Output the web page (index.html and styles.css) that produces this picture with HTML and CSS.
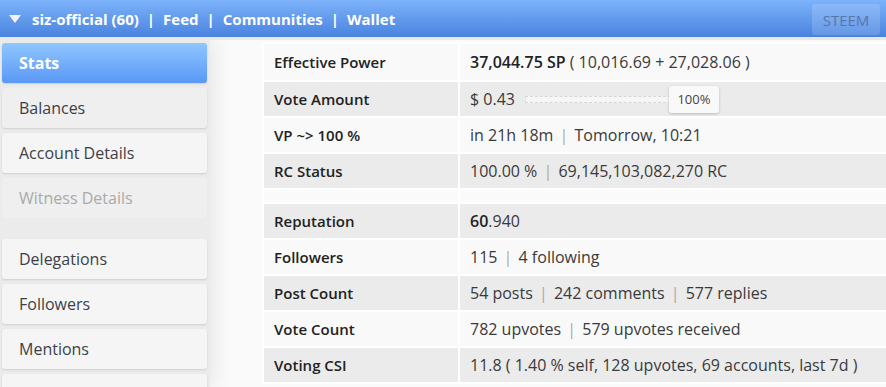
FILE: index.html
```html
<!DOCTYPE html>
<html lang="en">
<head>
    <meta charset="UTF-8">
    <title>siz-official - Stats</title>
    <link rel="stylesheet" href="styles.css">
</head>
<body>
    <div class="topbar">
        <div class="nav">
            <span class="caret"></span>
            <a href="#">siz-official (60)</a>
            <span class="sep">|</span>
            <a href="#">Feed</a>
            <span class="sep">|</span>
            <a href="#">Communities</a>
            <span class="sep">|</span>
            <a href="#">Wallet</a>
        </div>
        <button class="btn-chain">STEEM</button>
    </div>

    <div class="page">
        <div class="sidebar">
            <a class="menu-item active" href="#">Stats</a>
            <a class="menu-item" href="#">Balances</a>
            <a class="menu-item light" href="#">Account Details</a>
            <a class="menu-item disabled" href="#">Witness Details</a>
            <div class="menu-gap"></div>
            <a class="menu-item light" href="#">Delegations</a>
            <a class="menu-item light" href="#">Followers</a>
            <a class="menu-item light" href="#">Mentions</a>
            <a class="menu-item light" href="#"></a>
        </div>

        <div class="content">
            <table class="stats">
                <tr class="first">
                    <th>Effective Power</th>
                    <td><strong>37,044.75 SP</strong> ( 10,016.69 + 27,028.06 )</td>
                </tr>
                <tr class="dark">
                    <th>Vote Amount</th>
                    <td>
                        <div class="vote">
                            <span>$ 0.43</span>
                            <div class="slider">
                                <span class="track"></span>
                                <span class="thumb">100%</span>
                            </div>
                        </div>
                    </td>
                </tr>
                <tr>
                    <th>VP ~&gt; 100 %</th>
                    <td>in 21h 18m <span class="sep">|</span> Tomorrow, 10:21</td>
                </tr>
                <tr class="dark">
                    <th>RC Status</th>
                    <td>100.00 % <span class="sep">|</span> 69,145,103,082,270 RC</td>
                </tr>
                <tr class="spacer">
                    <th></th>
                    <td></td>
                </tr>
                <tr class="dark">
                    <th>Reputation</th>
                    <td><strong>60</strong>.940</td>
                </tr>
                <tr>
                    <th>Followers</th>
                    <td>115 <span class="sep">|</span> 4 following</td>
                </tr>
                <tr class="dark">
                    <th>Post Count</th>
                    <td>54 posts <span class="sep">|</span> 242 comments <span class="sep">|</span> 577 replies</td>
                </tr>
                <tr>
                    <th>Vote Count</th>
                    <td>782 upvotes <span class="sep">|</span> 579 upvotes received</td>
                </tr>
                <tr class="dark">
                    <th>Voting CSI</th>
                    <td>11.8 ( 1.40 % self, 128 upvotes, 69 accounts, last 7d )</td>
                </tr>
            </table>
        </div>
    </div>
</body>
</html>
```

FILE: styles.css
```css
* {
    margin: 0;
    padding: 0;
    box-sizing: border-box;
}

html, body {
    height: 387px;
    overflow: hidden;
}

body {
    font-family: 'Open Sans', 'Liberation Sans', sans-serif;
    font-size: 16px;
    background: #fafafa;
    color: #3a3a3a;
}

a {
    text-decoration: none;
    color: inherit;
}

/* top bar */
.topbar {
    height: 40px;
    display: flex;
    align-items: flex-start;
    justify-content: space-between;
    background: linear-gradient(#7db3fa, #4983de) no-repeat;
    background-size: 100% 37px;
    border-bottom: 3px solid #e8e8e8;
    padding: 0 6px 0 9px;
}

.nav {
    height: 37px;
    display: flex;
    align-items: center;
    gap: 8px;
    color: #fff;
    font-weight: 700;
    font-size: 15px;
}

.caret {
    width: 0;
    height: 0;
    border-left: 6px solid transparent;
    border-right: 6px solid transparent;
    border-top: 8px solid #eef2f8;
    margin-right: 3px;
}

.btn-chain {
    margin-top: 4px;
    width: 68px;
    height: 31px;
    border: none;
    border-radius: 3px;
    background: rgba(255,255,255,0.15);
    color: #5676ab;
    font-family: 'Open Sans', sans-serif;
    font-size: 15px;
}

/* layout */
.page {
    display: flex;
    height: 347px;
    overflow: hidden;
}

.sidebar {
    width: 210px;
    flex-shrink: 0;
    background: #ebebeb;
    padding: 3px 3px 0 2px;
    display: flex;
    flex-direction: column;
    gap: 5px;
    box-shadow: 6px 0 18px rgba(0,0,0,0.07);
    position: relative;
    z-index: 1;
}

.menu-item {
    display: block;
    height: 40px;
    flex-shrink: 0;
    line-height: 40px;
    padding-left: 17px;
    border-radius: 3px;
    background: #efefef;
    color: #3d3f48;
    box-shadow: 0 1px 2px rgba(0,0,0,0.12);
}

.menu-item.light {
    background: #f5f5f5;
}

.menu-item.active {
    background: linear-gradient(#8fc6fe, #5a98f6);
    color: #fff;
    font-weight: 700;
}

.menu-item.disabled {
    color: #aaa;
    box-shadow: none;
    background: #efefef;
}

.menu-gap {
    height: 11px;
    flex-shrink: 0;
}

.content {
    padding: 2px 0 0 52px;
    flex: 1;
    min-width: 0;
    overflow: hidden;
}

/* stats table */
.stats {
    border-collapse: separate;
    border-spacing: 2px;
    background: #fff;
    width: 680px;
}

.stats th,
.stats td {
    height: 34px;
    padding: 0 10px;
    text-align: left;
    white-space: nowrap;
    background: #f9f9f9;
}

.stats th {
    width: 194px;
    font-size: 15px;
    font-weight: 600;
    color: #222;
}

.stats tr.first th,
.stats tr.first td {
    height: 36px;
}

.stats tr.dark th,
.stats tr.dark td {
    background: #ebebeb;
}

.stats tr.spacer th,
.stats tr.spacer td {
    height: 12px;
    background: #fafafa;
}

.stats strong {
    font-weight: 600;
    color: #222;
}

.stats .sep {
    color: #aaa;
    margin: 0 2px;
}

.vote {
    display: flex;
    align-items: center;
    gap: 10px;
}

.slider {
    position: relative;
    width: 194px;
    height: 27px;
    display: flex;
    align-items: center;
}

.track {
    display: block;
    width: 146px;
    height: 7px;
    border: 1px dashed #d6d6d6;
    background: #f6f6f6;
}

.thumb {
    position: absolute;
    left: 144px;
    top: 0;
    width: 50px;
    height: 27px;
    line-height: 27px;
    text-align: center;
    font-size: 13px;
    background: #f9f9f9;
    border-radius: 3px;
    box-shadow: 0 1px 3px rgba(0,0,0,0.2);
    color: #444;
}
```
